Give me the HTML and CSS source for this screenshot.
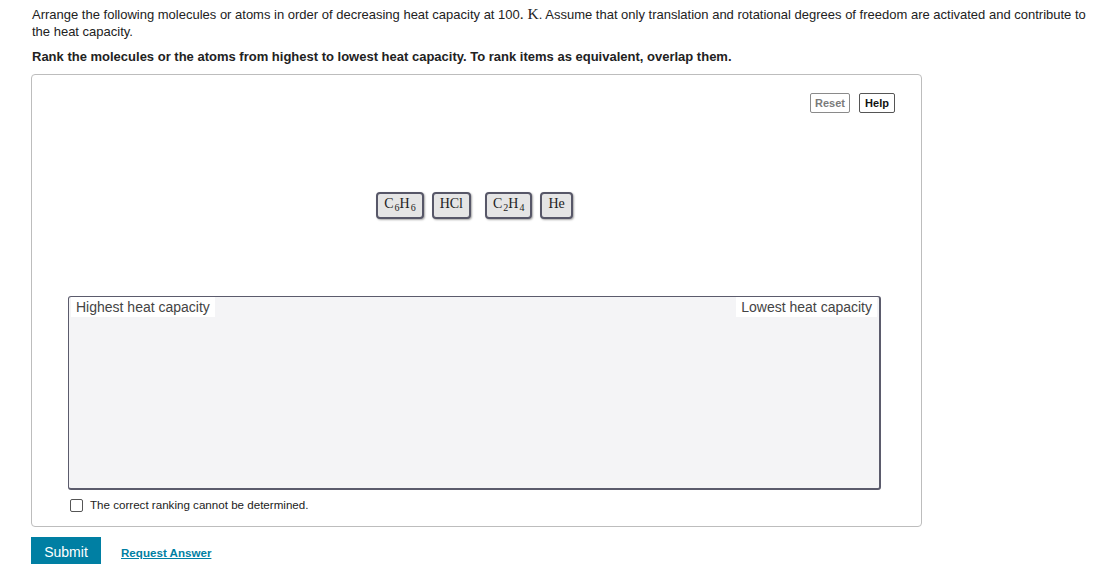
FILE: index.html
```html
<!DOCTYPE html>
<html>
<head>
<meta charset="utf-8">
<link rel="stylesheet" href="styles.css">
</head>
<body>
<div class="page">
  <p class="intro">Arrange the following molecules or atoms in order of decreasing heat capacity at 100<span class="math">.&nbsp;K</span>. Assume that only translation and rotational degrees of freedom are activated and contribute to the heat capacity.</p>
  <p class="instr">Rank the molecules or the atoms from highest to lowest heat capacity. To rank items as equivalent, overlap them.</p>
  <div class="panel">
    <div class="toolbar">
      <button class="btn reset">Reset</button>
      <button class="btn help">Help</button>
    </div>
    <div class="tiles">
      <div class="tile"><span class="formula">C<sub>6</sub>H<sub>6</sub></span></div>
      <div class="tile"><span class="formula">HCl</span></div>
      <div class="tile wide-gap"><span class="formula">C<sub>2</sub>H<sub>4</sub></span></div>
      <div class="tile"><span class="formula">He</span></div>
    </div>
    <div class="rank">
      <span class="label">Highest heat capacity</span>
      <span class="label">Lowest heat capacity</span>
    </div>
    <label class="check"><span class="box"></span>The correct ranking cannot be determined.</label>
  </div>
  <div class="actions">
    <button class="submit">Submit</button>
    <a class="request" href="#">Request Answer</a>
  </div>
</div>
</body>
</html>
```
FILE: styles.css
```css
html, body {
  margin: 0;
  padding: 0;
  background: #fff;
}
body {
  font-family: "Liberation Sans", Arial, Helvetica, sans-serif;
  color: #222;
  overflow: hidden;
}
.page {
  padding: 6px 10px 0 31px;
}
.intro {
  margin: 0 0 0 1px;
  font-size: 13px;
  line-height: 17px;
  color: #222;
}
.math {
  font-family: "Liberation Serif", "Times New Roman", serif;
  font-size: 15.5px;
  line-height: 1;
}
.instr {
  margin: 8px 0 0 1px;
  font-size: 13px;
  line-height: 17px;
  font-weight: bold;
  color: #222;
}
.panel {
  margin-top: 9px;
  width: 889px;
  height: 451px;
  border: 1px solid #bdbdbd;
  border-radius: 4px;
  box-sizing: content-box;
  display: flex;
  flex-direction: column;
}
.toolbar {
  margin-top: 18px;
  padding-right: 26px;
  display: flex;
  justify-content: flex-end;
  gap: 9px;
  height: 20px;
}
.btn {
  font-family: "Liberation Sans", Arial, sans-serif;
  font-size: 11px;
  font-weight: bold;
  background: #fff;
  border: 1px solid #777;
  border-radius: 2px;
  padding: 0 3px;
  height: 20px;
  line-height: 18px;
}
.reset {
  color: #7a7a7a;
  border-color: #8a8a8a;
  width: 40px;
}
.help {
  color: #111;
  border-color: #555;
  width: 36px;
}
.tiles {
  margin-top: 79px;
  display: flex;
  justify-content: center;
  gap: 8px;
  margin-left: -4px;
}
.tile {
  height: 27px;
  box-sizing: border-box;
  border: 2px solid #575768;
  border-radius: 4px;
  background: #e5e5e5;
  box-shadow: 1px 1px 2px rgba(0,0,0,0.35);
  font-family: "Liberation Serif", "Times New Roman", serif;
  font-size: 14px;
  color: #222;
  padding: 0 6px;
  display: flex;
  align-items: center;
}
.tile.wide-gap {
  margin-left: 6px;
}
.formula {
  line-height: 18px;
  margin-top: -3px;
}
.formula sub {
  font-size: 10px;
  line-height: 0;
  vertical-align: -3px;
  margin-left: 1px;
}
.rank {
  margin: 77px 0 0 36px;
  width: 813px;
  height: 194px;
  box-sizing: border-box;
  border: 2px solid #5b5b6c;
  border-top-width: 1px;
  border-left-width: 1px;
  border-radius: 3px;
  background: #f4f4f6;
  display: flex;
  justify-content: space-between;
  align-items: flex-start;
  padding: 0 2px 0 2px;
}
.label {
  background: #fff;
  font-size: 14px;
  line-height: 20px;
  color: #444;
  padding: 0 5px 0 5px;
}
.check {
  margin: 8px 0 0 38px;
  display: flex;
  align-items: center;
  gap: 7px;
  font-size: 11.6px;
  line-height: 14px;
  color: #222;
}
.box {
  width: 11px;
  height: 11px;
  border: 1px solid #555;
  border-radius: 2px;
  background: #fff;
}
.actions {
  margin-top: 10px;
  display: flex;
  align-items: center;
  gap: 20px;
}
.submit {
  width: 70px;
  height: 30px;
  background: #007fa3;
  color: #fff;
  border: none;
  border-radius: 0;
  font-family: "Liberation Sans", Arial, sans-serif;
  font-size: 14px;
  padding: 0;
}
.request {
  color: #007fa3;
  font-size: 11.6px;
  font-weight: bold;
  text-decoration: underline;
}
```
